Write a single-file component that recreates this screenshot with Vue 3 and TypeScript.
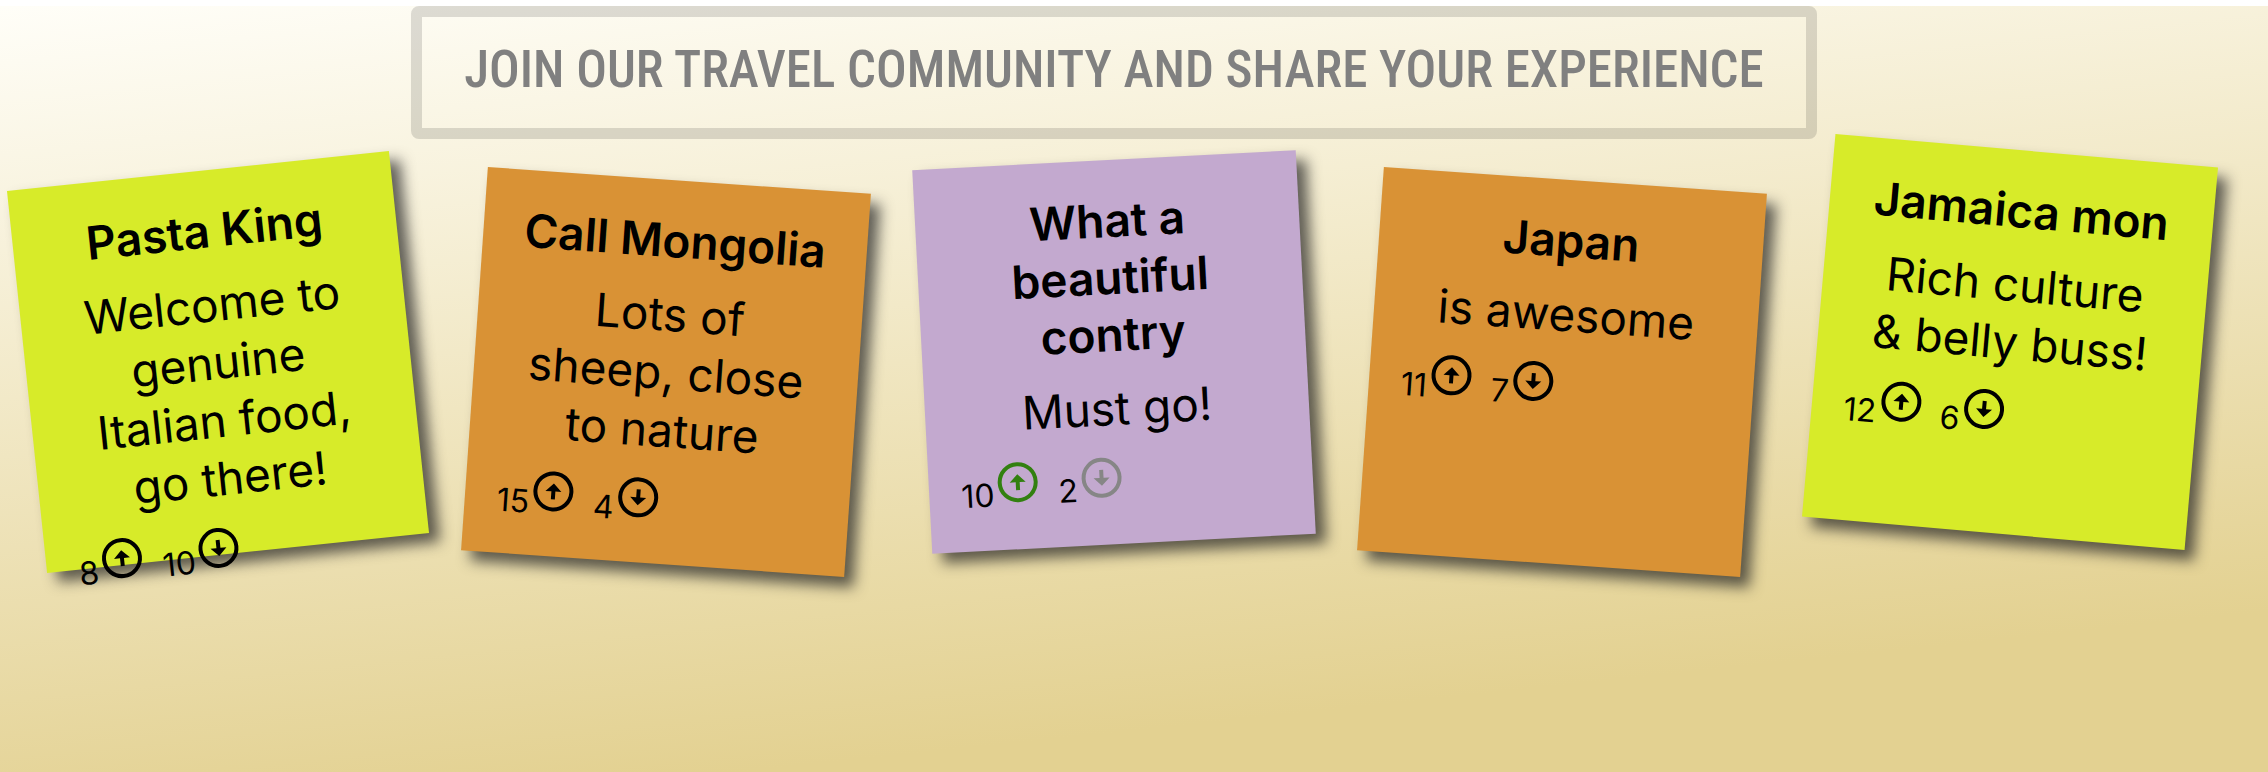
<script setup lang="ts">
type Vote = 'up' | 'down' | null

interface Note {
  id: number
  title: string
  text: string
  up: number
  down: number
  color: 'lime' | 'orange' | 'purple'
  vote: Vote
}

const notes: Note[] = [
  { id: 1, title: 'Pasta King', text: 'Welcome to genuine Italian food, go there!', up: 8, down: 10, color: 'lime', vote: null },
  { id: 2, title: 'Call Mongolia', text: 'Lots of sheep, close to nature', up: 15, down: 4, color: 'orange', vote: null },
  { id: 3, title: 'What a beautiful contry', text: 'Must go!', up: 10, down: 2, color: 'purple', vote: 'up' },
  { id: 4, title: 'Japan', text: 'is awesome', up: 11, down: 7, color: 'orange', vote: null },
  { id: 5, title: 'Jamaica mon', text: 'Rich culture & belly buss!', up: 12, down: 6, color: 'lime', vote: null },
]

function stateOf(note: Note, side: 'up' | 'down'): string {
  if (!note.vote) return ''
  return note.vote === side ? 'chosen' : 'dimmed'
}
</script>

<template>
  <main class="page">
    <h1 class="banner">JOIN OUR TRAVEL COMMUNITY AND SHARE YOUR EXPERIENCE</h1>
    <ul class="board">
      <li v-for="note in notes" :key="note.id" class="note" :class="note.color">
        <h2>{{ note.title }}</h2>
        <p>{{ note.text }}</p>
        <div class="votes">
          <div class="vote">
            <span>{{ note.up }}</span>
            <button type="button" aria-label="Vote up" :class="stateOf(note, 'up')">
              <svg viewBox="0 0 24 24" aria-hidden="true">
                <circle cx="12" cy="12" r="9" fill="none" stroke="currentColor" stroke-width="2" />
                <path d="M12 8l4 4h-3v4h-2v-4H8z" fill="currentColor" />
              </svg>
            </button>
          </div>
          <div class="vote">
            <span>{{ note.down }}</span>
            <button type="button" aria-label="Vote down" :class="stateOf(note, 'down')">
              <svg viewBox="0 0 24 24" aria-hidden="true">
                <circle cx="12" cy="12" r="9" fill="none" stroke="currentColor" stroke-width="2" />
                <path d="M12 16l4-4h-3V8h-2v4H8z" fill="currentColor" />
              </svg>
            </button>
          </div>
        </div>
      </li>
    </ul>
  </main>
</template>

<style>
body {
  margin: 0;
  background: #fff;
}
</style>

<style scoped>
.page {
  box-sizing: border-box;
  min-height: calc(100vh - 6px);
  margin-top: 6px;
  padding-right: 40px;
  display: flex;
  flex-direction: column;
  align-items: center;
  gap: 31px;
  background: linear-gradient(174deg, #fffef8, #e3d191 84%);
  color: #000;
  font-family: Inter, Roboto, "Liberation Sans", sans-serif;
}

.banner {
  margin: 0;
  padding: 24px 42px 30px;
  border: 11px solid rgba(0, 0, 0, 0.13);
  border-radius: 8px;
  color: #808080;
  font: 500 51px/57px "Roboto Condensed", Roboto, sans-serif;
  text-align: center;
}

.board {
  display: flex;
  flex-wrap: wrap;
  justify-content: center;
  gap: 64px;
  margin: 0;
  padding: 0;
  list-style: none;
}

.note {
  box-sizing: border-box;
  width: 384px;
  height: 384px;
  padding: 32px;
  box-shadow: 10px 10px 14px rgba(33, 33, 33, 0.7);
  transform: rotate(-6deg);
}

.note:nth-child(even) {
  transform: translateY(10px) rotate(4deg);
}

.note:nth-child(3n) {
  transform: translateY(-10px) rotate(-3deg);
}

.note:nth-child(5n) {
  transform: translateY(-20px) rotate(5deg);
}

.lime {
  background: #d7eb29;
}

.orange {
  background: #d99235;
}

.purple {
  background: #c3a9cf;
}

h2 {
  margin: 0 0 16px;
  font-size: 46px;
  font-weight: 600;
  line-height: 57px;
  text-align: center;
}

p {
  margin: 0 0 16px;
  padding: 0 16px;
  font-size: 46px;
  line-height: 58px;
  text-align: center;
}

.votes {
  display: flex;
  gap: 16px;
}

.vote {
  display: flex;
  align-items: flex-end;
  font-size: 32px;
  line-height: 32px;
}

.vote span {
  margin-bottom: -4px;
}

button {
  display: block;
  padding: 0;
  border: 0;
  background: none;
  color: #000;
  cursor: pointer;
}

button.chosen {
  color: #328010;
}

button.dimmed {
  color: #868686;
}

svg {
  display: block;
  width: 48px;
  height: 48px;
}
</style>
